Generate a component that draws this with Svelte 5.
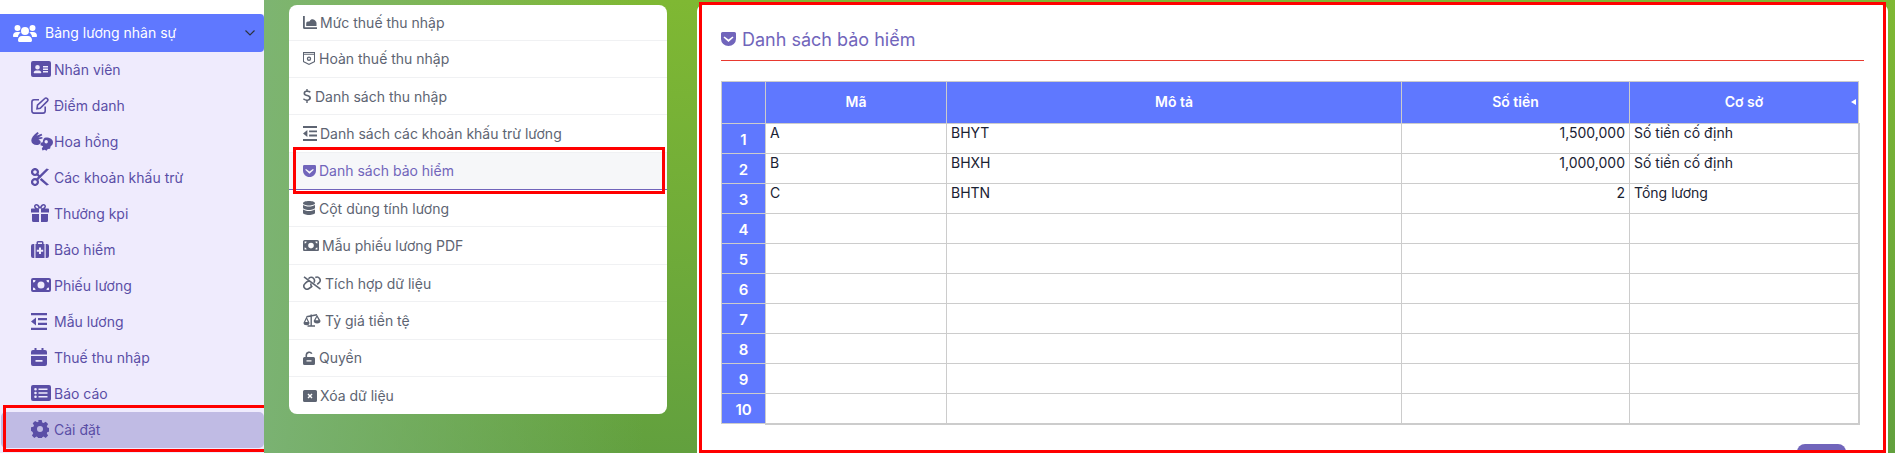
<script>
  const icons = {
    users: { w: 24, h: 18, d: "M12 3a4 4 0 1 1 0 8a4 4 0 0 1 0-8zM4.500 1a3 3 0 1 1 0 6a3 3 0 0 1 0-6zM19.500 1a3 3 0 1 1 0 6a3 3 0 0 1 0-6zM0 12c0-2.500 1.500-4 4-4h2c.7 0 1.300.2 1.800.5C6.200 9.500 5 11 5 13H1c-.6 0-1-.4-1-1zM24 12c0 .6-.4 1-1 1h-4c0-2-1.200-3.500-2.800-4.500.5-.3 1.100-.5 1.800-.5h2c2.500 0 4 1.500 4 4zM9 12h6c2.500 0 4 1.800 4 4.200c0 1-.7 1.800-1.600 1.800H6.600C5.700 18 5 17.200 5 16.200C5 13.800 6.500 12 9 12z" },
    card: { w: 20, h: 16, d: "M2 0h16a2 2 0 0 1 2 2v12a2 2 0 0 1-2 2H2a2 2 0 0 1-2-2V2a2 2 0 0 1 2-2zM6.500 4a2.300 2.300 0 1 0 0 4.600a2.300 2.300 0 0 0 0-4.600zM5 9.500c-1.300 0-2.300 1-2.300 2.300c0 .3.200.5.500.5h6.600c.3 0 .5-.2.500-.5c0-1.300-1-2.300-2.300-2.300zM12 5v1.400h5V5zM12 7.500v1.400h5V7.500zM12 10v1.400h5V10z" },
    pen: { w: 18, h: 17, s: "M8 2.800H3A2.200 2.200 0 0 0 .9 5v9A2.200 2.200 0 0 0 3 16.100h9a2.200 2.200 0 0 0 2.200-2.100V9.500M6.500 8.200L13.800 1.500a1.600 1.600 0 0 1 2.300 0l.3.400a1.600 1.600 0 0 1 0 2.200L9.200 11.200L6 11.800z" },
    hands: { w: 22, h: 19, d: "M6.500 0l1.300 1.200L5.500 3.800l5-2l.8 1.500l-4 2.200l4 -.5l.2 1.600l-4 1l2 1.400c.6 2-.6 3.700-2.800 3.900C3 13.200.5 11.800.3 8.800C.1 6 2.500 3 6.500 0zM15 5.500c4 0 7 1.800 7 4.800c0 2-1.100 3.200-2.300 4l-.7 2.400l-2.200.3l-1.300 1.700l-1.800-.9l-2.200.6l-.7-1.900l1.400-2.200l-2.700-1l.2-2.500l2-.5c.4-2.800 1.200-4.800 3.300-4.800zM15.200 8a1.700 1.700 0 1 0 0 3.400a1.700 1.700 0 0 0 0-3.400z" },
    scissors: { w: 18, h: 18, sw: 2.300, s: "M6.900 4a2.900 2.900 0 1 1-5.800 0a2.900 2.900 0 1 1 5.800 0zM6.900 14a2.900 2.900 0 1 1-5.800 0a2.900 2.900 0 1 1 5.800 0zM6 6L9.500 9.500M6 12L7 11", d: "M15.500.5L18 1.200L7.400 11.800L5.600 10.200zM10.500 10L18 16.800l-2.500.7L8.700 11.700z" },
    gift: { w: 18, h: 18, d: "M0 5.500c0-.6.400-1 1-1h3.200C3.300 3.800 3 3 3 2.300C3 1 4 0 5.400 0c1.500 0 2.700 1.200 3.600 3c.9-1.800 2.100-3 3.600-3C14 0 15 1 15 2.300c0 .7-.3 1.500-1.200 2.200H17c.6 0 1 .4 1 1V8.500H10V4.500H8V8.500H0zM5.400 1.500c-.5 0-.9.400-.9.800c0 .8.700 1.700 3 2.200C7 2.700 6.200 1.500 5.400 1.500zM12.600 1.500c-.8 0-1.600 1.200-2.100 3c2.300-.5 3-1.400 3-2.200c0-.4-.4-.8-.9-.8zM1 10h7v8H2.500A1.500 1.500 0 0 1 1 16.500zM10 10h7v6.500a1.500 1.500 0 0 1-1.500 1.500H10z" },
    suitcase: { w: 18, h: 17, d: "M5.500 1.500A1.500 1.500 0 0 1 7 0h4a1.500 1.500 0 0 1 1.500 1.500V3h1v14h-9V3h1zM7 1.500V3h4V1.500zM8 6.500v2.200H5.800v2H8v2.200h2v-2.200h2.200v-2H10V6.500zM0 5a2 2 0 0 1 2-2h1.300v14H2a2 2 0 0 1-2-2zM14.700 3H16a2 2 0 0 1 2 2v10a2 2 0 0 1-2 2h-1.300z" },
    money: { w: 20, h: 14, d: "M2 0h16a2 2 0 0 1 2 2v10a2 2 0 0 1-2 2H2a2 2 0 0 1-2-2V2a2 2 0 0 1 2-2zM10 3.500a3.500 3.500 0 1 0 0 7a3.500 3.500 0 0 0 0-7zM2 2v2.500A2.500 2.500 0 0 0 4.500 2zM15.500 2A2.500 2.500 0 0 0 18 4.500V2zM2 9.500V12h2.500A2.500 2.500 0 0 0 2 9.500zM18 9.500A2.500 2.500 0 0 0 15.500 12H18z" },
    outdent: { w: 16, h: 17, d: "M0 0h16v2.200H0zM7 5h9v2.200H7zM7 9.800h9V12H7zM0 14.800h16V17H0zM5 4.500v8L0 8.500z" },
    calendar: { w: 16, h: 18, d: "M3.500 0h2v2h5V0h2v2H14a2 2 0 0 1 2 2v2.500H0V4a2 2 0 0 1 2-2h1.500zM0 8h16v8a2 2 0 0 1-2 2H2a2 2 0 0 1-2-2zM4.500 12v1.800h7V12z" },
    list: { w: 20, h: 16, d: "M2 0h16a2 2 0 0 1 2 2v12a2 2 0 0 1-2 2H2a2 2 0 0 1-2-2V2a2 2 0 0 1 2-2zM4.500 3a1.300 1.300 0 1 0 0 2.600a1.300 1.300 0 0 0 0-2.600zM4.500 6.700a1.300 1.300 0 1 0 0 2.600a1.300 1.300 0 0 0 0-2.600zM4.500 10.400a1.300 1.300 0 1 0 0 2.600a1.300 1.300 0 0 0 0-2.600zM7.500 3.500v1.600h9V3.500zM7.500 7.200v1.600h9V7.200zM7.500 10.900v1.600h9v-1.600z" },
    gear: { w: 18, h: 18, d: "M7.300 0h3.400l.5 2.400l1.400.6l2.100-1.300l2.400 2.400l-1.300 2.100l.6 1.400l2.400.5v3.400l-2.400.5l-.6 1.400l1.300 2.100l-2.400 2.400l-2.100-1.300l-1.400.6l-.5 2.400H7.300l-.5-2.400l-1.400-.6l-2.100 1.300l-2.400-2.400l1.300-2.100l-.6-1.400L0 10.700V7.300l2.400-.5l.6-1.400L1.700 3.300l2.400-2.400l2.100 1.300l1.400-.6zM9 6a3 3 0 1 0 0 6a3 3 0 0 0 0-6z" },
    area: { w: 14, h: 13, d: "M0 0h1.800v11.200H14V13H1.500A1.500 1.500 0 0 1 0 11.500zM3.200 10V7.500a2 2 0 0 1 2.500-2l1-.2C7.500 3.500 9 3 10.500 3.500c1.500.5 3 2 3 3.500v3z" },
    receipt: { w: 13, h: 13, d: "M0 0h12v10l-6 3l-6-3zM1 2.800v6.500l5 2.500l5-2.500V2.800zM1 1v.8h10V1zM6 4.500a2.200 2.200 0 1 0 0 4.400a2.200 2.200 0 0 0 0-4.400zM6 5.800a.9.9 0 1 1 0 1.800a.9.9 0 0 1 0-1.800z" },
    pocket: { w: 15, h: 14, d: "M1.500 0h12A1.500 1.500 0 0 1 15 1.500V7a7.500 7 0 0 1-15 0V1.500A1.500 1.500 0 0 1 1.500 0zM3.500 4.500L2.500 5.500L7.500 10L12.500 5.500L11.500 4.500L7.500 7.500z" },
    dollar: { w: 9, h: 14, d: "M3.300 0h1.400v1.500c1.200.1 2.200.5 3 1L7 3.800C6 3.200 5 2.900 4.200 2.900c-1.300 0-2 .5-2 1.300c0 .8.600 1.100 2.200 1.600c2.200.7 3.600 1.300 3.600 3.200c0 1.600-1.200 2.700-3.300 2.900V14H3.300v-2.100c-1.300-.1-2.400-.6-3.300-1.300l.8-1.300c1 .8 2.100 1.200 3.100 1.200c1.400 0 2.200-.6 2.200-1.500c0-.9-.7-1.200-2.300-1.700C1.700 6.600.5 6 .5 4.200c0-1.500 1.100-2.500 2.800-2.700z" },
    database: { w: 13, h: 14, d: "M6 0c3.300 0 6 .9 6 2.200S9.300 4.400 6 4.400S0 3.500 0 2.200S2.700 0 6 0zM0 4c1.300.9 3.500 1.500 6 1.500S10.700 4.900 12 4v2.800C12 8 9.300 9 6 9S0 8 0 6.800zM0 8.600c1.300.9 3.500 1.500 6 1.500s4.700-.6 6-1.500v3.200C12 13.100 9.300 14 6 14s-6-.9-6-2.200z" },
    slash: { w: 19, h: 14, s: "M1 .8L17.500 13.200M5.500 2.800C7 .8 9 .8 10.500 2.300c1.300 1.400 1.300 3 .3 4.400M12.300 1.500c1.600-.8 3.300-.4 4.300 1c1 1.500.7 3.200-.7 4.400l-1.700 1.400M7.500 5.500c-1.500-.7-3.300-.2-4.300.9L1.900 7.700C.6 9 .6 10.800 1.600 12c1.100 1.300 3 1.500 4.400.5l2.300-1.700M8 7.500c-.5 1.500 0 2.500 1.300 3.500" },
    scale: { w: 19, h: 14, sw: 1.400, s: "M8.200 1.500V13M4.500 13h7.500M3.500 3.800L14 1.800", d: "M3.500 3.500L6.500 9.800a3 2.500 0 0 1-6 0zM3.500 6L2.200 9h2.600zM14 1.800L17.500 7.800a3.300 2.700 0 0 1-6.800 0zM14 4.300L12.400 7.300h3.200z" },
    unlock: { w: 13, h: 14, d: "M2.500 4.500a3.700 3.700 0 0 1 7-2l-1.500.6a2.100 2.100 0 0 0-3.900 1.100V6h6.400A1.500 1.500 0 0 1 12 7.500V12.500A1.500 1.500 0 0 1 10.500 14h-9A1.500 1.500 0 0 1 0 12.500V7.500A1.500 1.500 0 0 1 1.500 6h1zM3.500 9.200v1.400h5V9.200z" },
    xmark: { w: 14, h: 12, d: "M1.500 0h11A1.500 1.500 0 0 1 14 1.500v9a1.500 1.500 0 0 1-1.500 1.500h-11A1.500 1.500 0 0 1 0 10.500v-9A1.500 1.500 0 0 1 1.500 0zM5.500 3.500L4.500 4.500L6 6L4.500 7.500L5.500 8.500L7 7L8.500 8.500L9.500 7.500L8 6L9.500 4.500L8.500 3.500L7 5z" }
  };

  const sideItems = [
    ["card", "Nhân viên"],
    ["pen", "Điểm danh"],
    ["hands", "Hoa hồng"],
    ["scissors", "Các khoản khấu trừ"],
    ["gift", "Thưởng kpi"],
    ["suitcase", "Bảo hiểm"],
    ["money", "Phiếu lương"],
    ["outdent", "Mẫu lương"],
    ["calendar", "Thuế thu nhập"],
    ["list", "Báo cáo"],
    ["gear", "Cài đặt"]
  ];

  const menuItems = [
    ["area", "Mức thuế thu nhập"],
    ["receipt", "Hoàn thuế thu nhập"],
    ["dollar", "Danh sách thu nhập"],
    ["outdent", "Danh sách các khoản khấu trừ lương", 14],
    ["pocket", "Danh sách bảo hiểm", 13],
    ["database", "Cột dùng tính lương"],
    ["money", "Mẫu phiếu lương PDF", 16],
    ["slash", "Tích hợp dữ liệu"],
    ["scale", "Tỷ giá tiền tệ"],
    ["unlock", "Quyền"],
    ["xmark", "Xóa dữ liệu"]
  ];

  const columns = ["Mã", "Mô tả", "Số tiền", "Cơ sở"];

  const rows = [
    ["A", "BHYT", "1,500,000", "Số tiền cố định"],
    ["B", "BHXH", "1,000,000", "Số tiền cố định"],
    ["C", "BHTN", "2", "Tổng lương"],
    ["", "", "", ""],
    ["", "", "", ""],
    ["", "", "", ""],
    ["", "", "", ""],
    ["", "", "", ""],
    ["", "", "", ""],
    ["", "", "", ""]
  ];
</script>

{#snippet icon(name, width)}
  {@const ic = icons[name]}
  {@const w = width ?? ic.w}
  <svg class="ico" width={w} height={(ic.h * w) / ic.w} viewBox="0 0 {ic.w} {ic.h}">
    {#if ic.d}<path d={ic.d} fill="currentColor" fill-rule="evenodd" />{/if}
    {#if ic.s}<path d={ic.s} fill="none" stroke="currentColor" stroke-width={ic.sw ?? 1.6} />{/if}
  </svg>
{/snippet}

<div class="page">
  <aside class="sidebar">
    <div class="sidebar-head">
      {@render icon("users")}
      <span>Bảng lương nhân sự</span>
      <svg class="chevron" width="10" height="6" viewBox="0 0 10 6">
        <path d="M.5.500L5 5L9.500.500" fill="none" stroke="#2d3340" stroke-width="1.200" />
      </svg>
    </div>
    {#each sideItems as [name, label]}
      <div class="side-item" class:current={label === "Cài đặt"}>
        <span class="side-icon">{@render icon(name)}</span>
        <span>{label}</span>
      </div>
    {/each}
    <div class="mark mark-side"></div>
  </aside>

  <div class="content">
    <nav class="menu">
      {#each menuItems as [name, label, width]}
        <div class="menu-item" class:active={label === "Danh sách bảo hiểm"}>
          {@render icon(name, width)}
          <span>{label}</span>
        </div>
      {/each}
      <div class="mark mark-menu"></div>
    </nav>

    <section class="panel">
      <h2 class="title">
        {@render icon("pocket")}
        <span>Danh sách bảo hiểm</span>
      </h2>
      <table>
        <colgroup>
          <col class="c0" />
          <col class="c1" />
          <col class="c2" />
          <col class="c3" />
          <col class="c4" />
        </colgroup>
        <thead>
          <tr>
            <th></th>
            {#each columns as col, i}
              <th class:sorted={i === 3}>{col}</th>
            {/each}
          </tr>
        </thead>
        <tbody>
          {#each rows as row, i}
            <tr>
              <th class="num">{i + 1}</th>
              <td>{row[0]}</td>
              <td>{row[1]}</td>
              <td class="right">{row[2]}</td>
              <td>{row[3]}</td>
            </tr>
          {/each}
        </tbody>
      </table>
      <div class="footer"><button type="button" aria-label="Lưu"></button></div>
    </section>
    <div class="mark mark-panel"></div>
  </div>
</div>

<style>
  :global(body) {
    margin: 0;
    background: #fff;
  }

  .page {
    width: 1895px;
    height: 453px;
    display: flex;
    overflow: hidden;
    font-family: Inter, "Noto Sans", sans-serif;
    font-size: 14px;
  }

  .ico {
    display: block;
    flex: none;
  }

  .mark {
    position: absolute;
    border: 3px solid #f00;
    box-sizing: border-box;
    pointer-events: none;
  }

  /* sidebar */
  .sidebar {
    position: relative;
    width: 264px;
    flex: none;
    background: #efebfd;
    border-top: 14px solid #fff;
    color: #5a4ea6;
  }

  .sidebar-head {
    height: 38px;
    box-sizing: border-box;
    padding: 0 0 1px 13px;
    display: flex;
    align-items: center;
    gap: 8px;
    background: #5f78ff;
    color: #fff;
    border-radius: 0 4px 4px 0;
  }

  .chevron {
    margin-left: auto;
    margin-right: 9px;
  }

  .side-item {
    height: 36px;
    box-sizing: border-box;
    display: flex;
    align-items: center;
    padding: 0 0 2px 31px;
  }

  .side-icon {
    width: 23px;
    flex: none;
  }

  .side-item.current {
    background: #c0bbe4;
    border-radius: 5px;
    margin-left: 1px;
    padding-left: 30px;
  }

  .mark-side {
    left: 3px;
    top: 391px;
    width: 264px;
    height: 47px;
  }

  /* green area */
  .content {
    position: relative;
    flex: 1;
    display: flex;
    align-items: flex-start;
    padding: 5px 7px 0 25px;
    gap: 30px;
    background:
      linear-gradient(90deg, rgba(125, 180, 120, 0.9) 0, rgba(125, 180, 120, 0) 380px),
      linear-gradient(180deg, #7fb833 0, #62a03e 100%);
  }

  .menu {
    position: relative;
    width: 378px;
    flex: none;
    background: #fff;
    border-radius: 8px;
    color: #5d6472;
  }

  .menu-item {
    height: 37.400px;
    box-sizing: border-box;
    display: flex;
    align-items: center;
    gap: 3px;
    padding-left: 14px;
    border-bottom: 1px solid #f0f1f3;
  }

  .menu-item:first-child {
    height: 35.500px;
  }

  .menu-item:nth-last-child(2) {
    border-bottom: 0;
  }

  .menu-item.active {
    background: #f6f7f9;
    color: #7165bb;
    border-bottom-color: #7165bb;
  }

  .mark-menu {
    left: 4px;
    top: 142px;
    width: 372px;
    height: 47px;
  }

  .panel {
    width: 1191px;
    flex: none;
    box-sizing: border-box;
    height: 470px;
    padding: 0 24px;
    background: #fff;
    border-radius: 6px;
  }

  .title {
    height: 56px;
    margin: 0;
    box-sizing: border-box;
    padding-top: 13px;
    display: flex;
    align-items: center;
    gap: 6px;
    font-size: 18px;
    font-weight: 400;
    color: #7165bb;
    border-bottom: 1px solid #e8392f;
  }

  .mark-panel {
    left: 435px;
    top: 2px;
    width: 1187px;
    height: 451px;
  }

  /* table */
  table {
    width: 1137px;
    margin-top: 20px;
    table-layout: fixed;
    border-collapse: collapse;
    color: #1a2233;
  }

  .c0 { width: 44px; }
  .c1 { width: 181px; }
  .c2 { width: 455px; }
  .c3 { width: 228px; }
  .c4 { width: 229px; }

  th, td {
    border: 1px solid #ccc;
    padding: 0 4px;
    box-sizing: border-box;
  }

  thead th {
    height: 42px;
    padding-bottom: 3px;
    background: #5f78ff;
    color: #fff;
    font-weight: 600;
    position: relative;
  }

  .sorted::after {
    content: "";
    position: absolute;
    right: 2px;
    top: 17px;
    border: 3.500px solid transparent;
    border-left: 0;
    border-right: 5px solid #fff;
  }

  tbody tr {
    height: 30px;
  }

  td {
    vertical-align: top;
    line-height: 17px;
  }

  td:last-child {
    border-right-width: 2px;
  }

  tbody tr:last-child td {
    border-bottom-width: 2px;
  }

  .num {
    background: #5f78ff;
    color: #fff;
    font-size: 15px;
    font-weight: 600;
    padding-top: 2px;
  }

  .right {
    text-align: right;
  }

  .footer {
    display: flex;
    justify-content: flex-end;
    padding: 19px 18px 0 0;
  }

  button {
    width: 49px;
    height: 36px;
    border: none;
    border-radius: 8px;
    background: #7165bb;
  }
</style>
